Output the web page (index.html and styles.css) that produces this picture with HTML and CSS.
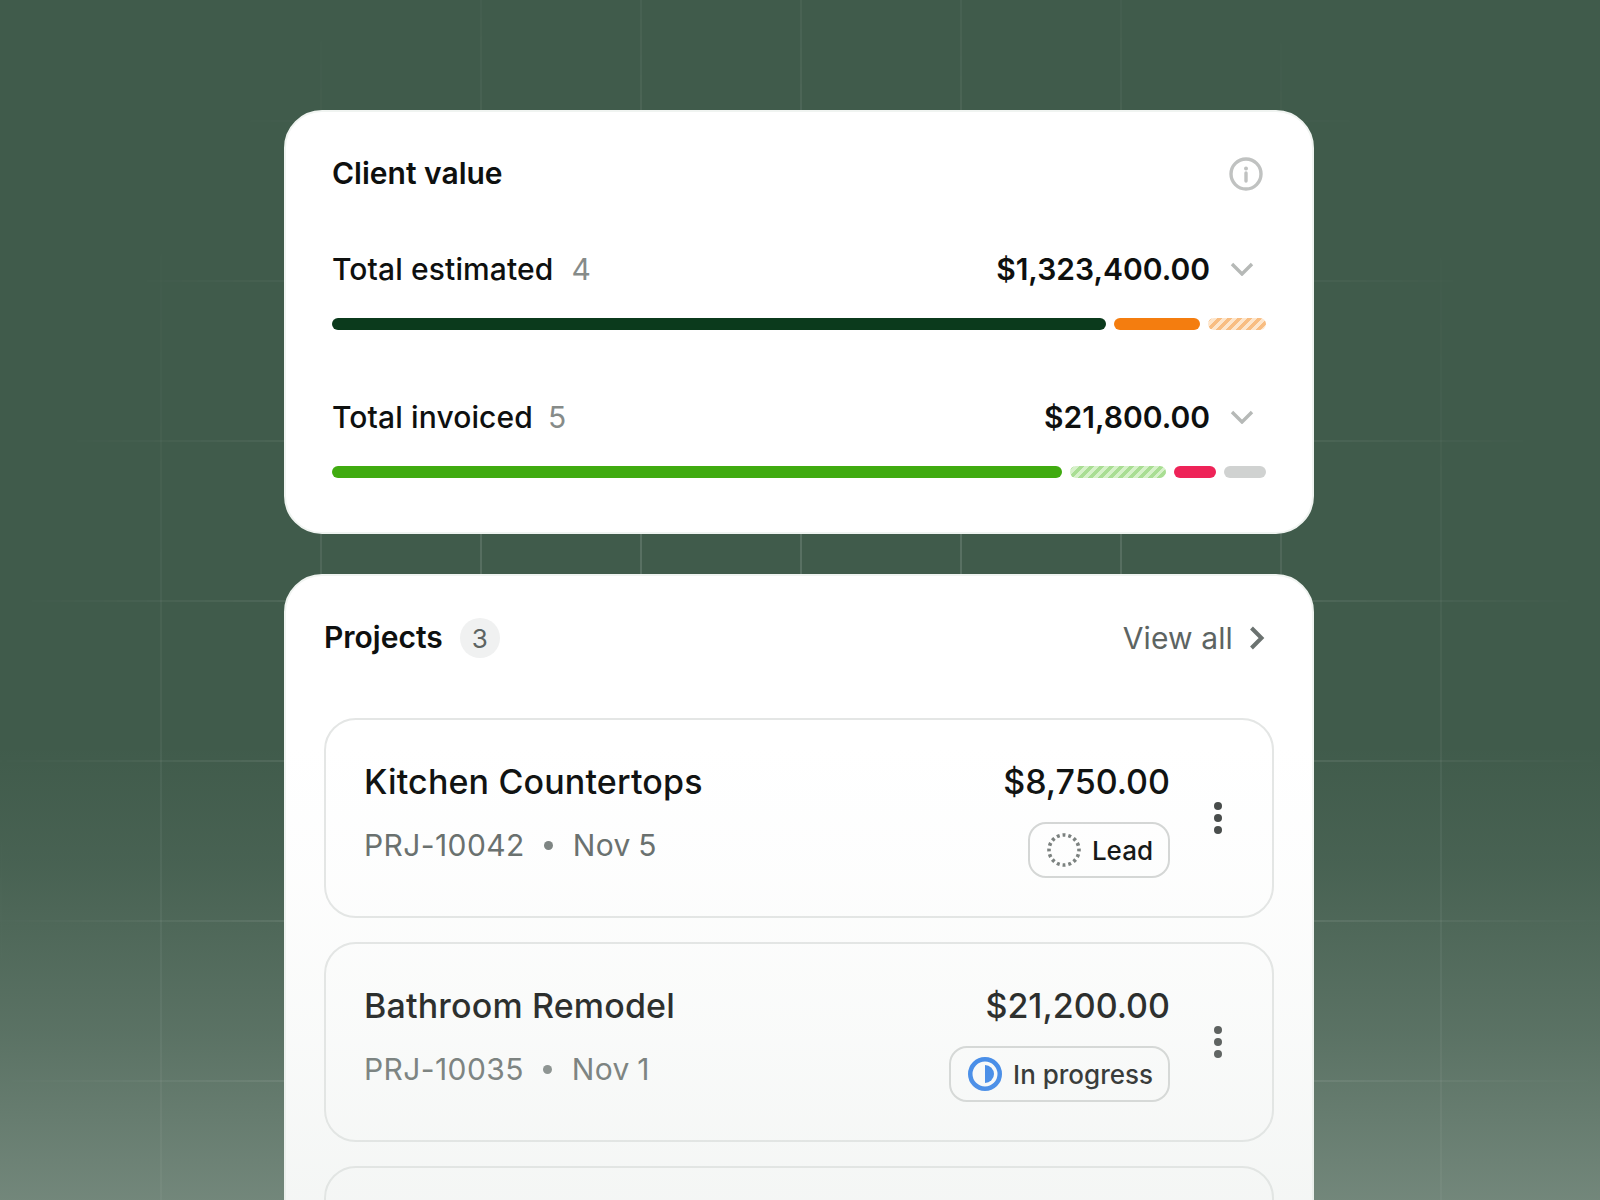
FILE: index.html
```html
<!DOCTYPE html>
<html lang="en">
<head>
<meta charset="utf-8">
<title>Client value</title>
<link rel="stylesheet" href="styles.css">
</head>
<body>
<div class="grid-lines"></div>
<main class="stack">
  <section class="card value-card">
    <header class="value-head">
      <h2 class="title">Client value</h2>
      <svg class="info" viewBox="0 0 34 34" fill="none"><circle cx="17" cy="17" r="15" stroke="#c0c2c1" stroke-width="3.4"/><circle cx="17" cy="11.5" r="2" fill="#c0c2c1"/><path d="M17 16v8" stroke="#c0c2c1" stroke-width="3.4" stroke-linecap="round"/></svg>
    </header>
    <div class="metric first">
      <div class="metric-row">
        <span class="metric-label">Total estimated<span class="metric-count count-wide">4</span></span>
        <span class="metric-amount">$1,323,400.00</span>
        <svg class="chev" viewBox="0 0 24 14" fill="none"><path d="M2 2l10 10L22 2" stroke="#b6b9b7" stroke-width="3.4"/></svg>
      </div>
      <div class="bar">
        <span class="seg dark" style="flex-grow:774"></span>
        <span class="seg orange" style="flex-grow:86"></span>
        <span class="seg hatch-orange" style="flex-grow:58"></span>
      </div>
    </div>
    <div class="metric">
      <div class="metric-row">
        <span class="metric-label">Total invoiced<span class="metric-count">5</span></span>
        <span class="metric-amount">$21,800.00</span>
        <svg class="chev" viewBox="0 0 24 14" fill="none"><path d="M2 2l10 10L22 2" stroke="#b6b9b7" stroke-width="3.4"/></svg>
      </div>
      <div class="bar">
        <span class="seg green" style="flex-grow:730"></span>
        <span class="seg hatch-green" style="flex-grow:96"></span>
        <span class="seg red" style="flex-grow:42"></span>
        <span class="seg grey" style="flex-grow:42"></span>
      </div>
    </div>
  </section>

  <section class="card projects-card">
    <header class="projects-head">
      <h2 class="title">Projects</h2>
      <span class="badge-count">3</span>
      <a class="view-all">View all
        <svg class="chev-right" viewBox="0 0 16 24" fill="none"><path d="M2.5 2l10 10-10 10" stroke="#6b7270" stroke-width="4"/></svg>
      </a>
    </header>
    <div class="rows">
      <article class="row">
        <div class="row-main">
          <div class="row-name">Kitchen Countertops</div>
          <div class="row-meta"><span>PRJ-10042</span><i class="sep"></i><span>Nov 5</span></div>
        </div>
        <div class="row-side">
          <div class="row-amount">$8,750.00</div>
          <div class="status">
            <svg class="status-icon" viewBox="0 0 34 34" fill="none"><circle cx="17" cy="17" r="15" stroke="#777d7b" stroke-width="3.6" pathLength="16" stroke-dasharray=".5 .5" stroke-dashoffset=".25"/></svg>
            Lead
          </div>
        </div>
        <div class="kebab"><i></i><i></i><i></i></div>
      </article>
      <article class="row">
        <div class="row-main">
          <div class="row-name">Bathroom Remodel</div>
          <div class="row-meta"><span>PRJ-10035</span><i class="sep"></i><span>Nov 1</span></div>
        </div>
        <div class="row-side">
          <div class="row-amount">$21,200.00</div>
          <div class="status">
            <svg class="status-icon" viewBox="0 0 34 34" fill="none"><circle cx="17" cy="17" r="14.75" stroke="#267aea" stroke-width="4.5"/><path d="M17 8A9 9 0 0 1 17 26Z" fill="#267aea"/></svg>
            In progress
          </div>
        </div>
        <div class="kebab"><i></i><i></i><i></i></div>
      </article>
      <article class="row"></article>
    </div>
  </section>
</main>
<div class="fade"></div>
</body>
</html>
```

FILE: styles.css
```css
* { box-sizing: border-box; }
html, body { margin: 0; height: 1200px; overflow: hidden; }
body {
  position: relative;
  background: #405b4b;
  font-family: Inter, "Noto Sans", sans-serif;
  color: #0e100f;
}
.grid-lines {
  position: absolute;
  inset: 0;
  background-image:
    linear-gradient(to right, rgba(255,255,255,.13) 2px, transparent 2px),
    linear-gradient(to bottom, rgba(255,255,255,.13) 2px, transparent 2px);
  background-size: 160px 160px;
  background-position: 0 120px;
  -webkit-mask-image: radial-gradient(ellipse 820px 1100px at 800px 900px, #000 45%, transparent 100%);
  mask-image: radial-gradient(ellipse 820px 1100px at 800px 900px, #000 45%, transparent 100%);
}
.fade {
  position: absolute;
  inset: 0;
  pointer-events: none;
  background: linear-gradient(to bottom,
    rgba(221,227,223,0) 62%,
    rgba(221,227,223,.05) 72%,
    rgba(221,227,223,.17) 86%,
    rgba(221,227,223,.32) 100%);
}
.stack {
  position: relative;
  width: 1030px;
  margin: 110px 0 0 284px;
  display: flex;
  flex-direction: column;
  gap: 40px;
}
.card {
  background: #fff;
  border: 2px solid #f0f4f1;
  border-radius: 38px;
}
.value-card { height: 424px; padding: 44px 46px 0; }
.value-head { display: flex; align-items: center; justify-content: space-between; height: 36px; }
.title { margin: -2px 0 0; font-size: 30px; line-height: 36px; font-weight: 600; }
.info { width: 34px; height: 34px; margin-right: 3px; }
.metric { margin-top: 69px; }
.metric.first { margin-top: 59px; }
.metric-row { display: flex; align-items: center; height: 36px; }
.metric-label { font-size: 30px; line-height: 36px; flex: 1; font-weight: 450; letter-spacing: .12px; }
.metric-count { color: #868b89; margin-left: 15px; font-weight: 400; }
.count-wide { margin-left: 18px; }
.metric-amount { font-size: 30px; line-height: 36px; font-weight: 600; }
.chev { width: 24px; height: 14px; margin: 0 12px 0 20px; }
.bar { display: flex; gap: 8px; height: 12px; margin-top: 31px; }
.seg { display: block; flex-basis: 0; border-radius: 6px; }
.dark { background: #0b3a1c; }
.orange { background: #f47d0f; }
.green { background: #40ab10; }
.red { background: #ee2358; }
.grey { background: #d0d2d1; }
.hatch-orange { background: repeating-linear-gradient(135deg, #f8bd82 0 3.5px, #fde6cd 3.5px 7px); }
.hatch-green { background: repeating-linear-gradient(135deg, #a9de93 0 3.5px, #d6f1c9 3.5px 7px); }

.projects-card { height: 700px; padding: 0 38px; }
.projects-head { display: flex; align-items: center; height: 40px; margin-top: 42px; }
.badge-count {
  width: 40px; height: 40px; margin-left: 17px;
  display: flex; align-items: center; justify-content: center;
  border-radius: 50%;
  background: #f0f1f1;
  color: #5d6462;
  font-size: 26px;
}
.view-all {
  margin-left: auto;
  display: flex; align-items: center; gap: 16px;
  font-size: 30px; color: #5d6462;
  letter-spacing: .12px;
  padding-right: 9px;
}
.chev-right { width: 16px; height: 24px; }
.rows { display: flex; flex-direction: column; gap: 24px; margin-top: 60px; }
.row {
  height: 200px;
  flex: none;
  display: flex;
  align-items: flex-start;
  padding: 40px 0 0 38px;
  border: 2px solid #e4e6e5;
  border-radius: 32px;
  position: relative;
}
.row-main { flex: 1; }
.row-name { font-size: 34px; line-height: 44px; font-weight: 450; letter-spacing: .16px; }
.row-meta {
  display: flex; align-items: center;
  margin-top: 21px;
  font-size: 30px; line-height: 40px; color: #656c6a;
  letter-spacing: .4px;
  word-spacing: -1.5px;
}
.sep { width: 9px; height: 9px; margin: 0 20px 0 19px; border-radius: 50%; background: #7a817f; }
.row-side { display: flex; flex-direction: column; align-items: flex-end; }
.row-amount { font-size: 34px; line-height: 44px; font-weight: 450; }
.status {
  margin-top: 18px;
  height: 56px;
  display: flex; align-items: center; gap: 11px;
  padding: 0 15px 0 17px;
  border: 2px solid #d4d6d5;
  border-radius: 18px;
  font-size: 26px;
  font-weight: 450;
}
.status-icon { width: 34px; height: 34px; }
.kebab {
  position: relative;
  top: 42px;
  display: flex; flex-direction: column; gap: 4px;
  margin: 0 50px 0 44px;
}
.kebab i { width: 8px; height: 8px; border-radius: 50%; background: #444847; display: block; }
```
